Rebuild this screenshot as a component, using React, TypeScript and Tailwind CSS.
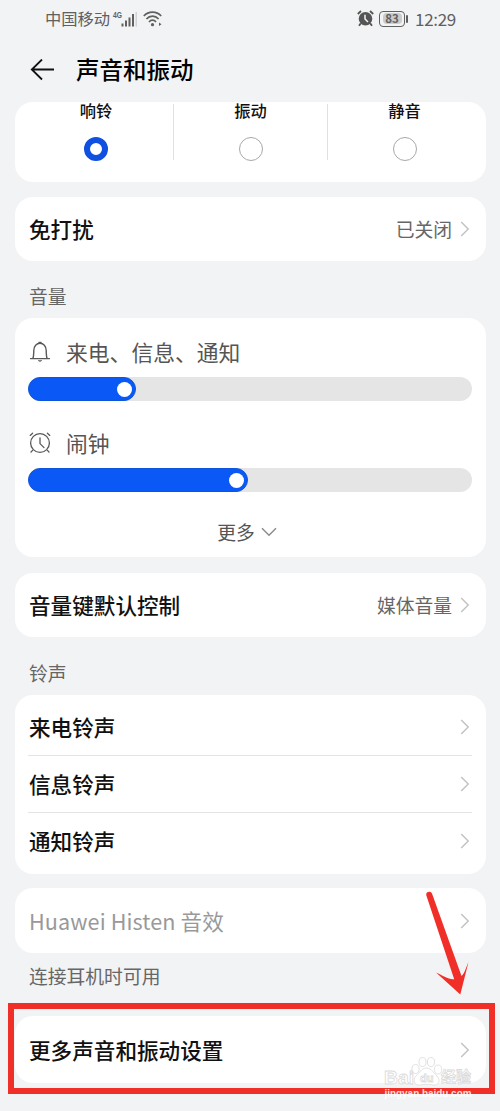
import React from 'react';

interface SettingRowProps {
  title: string;
  value?: string;
  disabled?: boolean;
  className?: string;
}

interface VolumeSliderProps {
  label: string;
  icon: React.ReactNode;
  value: number;
}

const modes = [
  { name: '响铃', checked: true },
  { name: '振动', checked: false },
  { name: '静音', checked: false },
];

const ringtones = ['来电铃声', '信息铃声', '通知铃声'];

const ChevronRight = () => (
  <svg className="w-2.5 h-4" viewBox="0 0 10 16" fill="none" stroke="#c3c3c3" strokeWidth="1.5">
    <path d="M1.2 1 L8.2 8 L1.2 15" />
  </svg>
);

const BellIcon = () => (
  <svg className="w-[22px] h-[22px]" viewBox="0 0 22 22" fill="none" stroke="#595959" strokeWidth="1.4">
    <path d="M1.5 17.6 H20.5" strokeLinecap="round" />
    <path d="M3.9 17.4 C4.7 15.6 4.7 13.5 4.8 9.4 C4.9 5.2 7.5 2.2 11 2.2 C14.5 2.2 17.1 5.2 17.2 9.4 C17.3 13.5 17.3 15.6 18.1 17.4" />
    <path d="M10 1.5 H12" strokeLinecap="round" />
    <path d="M8.8 19.3 H13.2 C12.6 21.2 9.4 21.2 8.8 19.3 Z" fill="#595959" stroke="none" />
  </svg>
);

const ClockIcon = () => (
  <svg className="w-[22px] h-[22px]" viewBox="0 0 22 22" fill="none" stroke="#595959" strokeWidth="1.3" strokeLinecap="round">
    <circle cx="11" cy="11" r="9.4" />
    <path d="M11 6 V11.6 L15 15.6" />
    <path d="M1.2 3.4 L3.6 1.2 M20.8 3.4 L18.4 1.2" />
    <path d="M3.6 18.4 L2 20 M18.4 18.4 L20 20" />
  </svg>
);

const SettingRow: React.FC<SettingRowProps> = ({ title, value, disabled, className = '' }) => {
  return (
    <div className={`flex items-center justify-between pl-3.5 pr-4 ${className}`}>
      <span className={`text-[21.6px] whitespace-nowrap ${disabled ? 'tracking-[0.1px] text-[#999999]' : 'font-medium text-[#111111]'}`}>
        {title}
      </span>
      <div className="flex items-center gap-2">
        {value && <span className="text-[18.8px] text-[#666666]">{value}</span>}
        <ChevronRight />
      </div>
    </div>
  );
};

const VolumeSlider: React.FC<VolumeSliderProps> = ({ label, icon, value }) => {
  return (
    <div className="h-[91px] pl-[13px] pr-3.5">
      <div className="flex items-center h-[34px] gap-[15px] pl-[1px]">
        {icon}
        <span className="text-[21.8px] text-[#555555]">{label}</span>
      </div>
      <div className="mt-2 h-6 rounded-full bg-[#e5e5e5]">
        <div
          className="flex items-center justify-end h-6 pr-[3px] rounded-full bg-[#0a59f7] border border-[#0f55dc]"
          style={{ width: `${value}px` }}
        >
          <div className="w-[15px] h-[15px] rounded-full bg-white" />
        </div>
      </div>
    </div>
  );
};

const StatusBar = () => (
  <div className="flex items-center justify-between h-[37px] pl-[45px] pr-11 text-[#606060]">
    <div className="flex items-center">
      <span className="text-[16.3px]">中国移动</span>
      <svg className="w-[26px] h-5 ml-0.5" viewBox="0 0 26 20" fill="#606060">
        <text x="1" y="8.5" fontSize="9.5" fontWeight="700" fontFamily="Liberation Sans, sans-serif" textLength="9" lengthAdjust="spacingAndGlyphs">4G</text>
        <rect x="9.5" y="14.5" width="2" height="3" />
        <rect x="13" y="11.5" width="2" height="6" />
        <rect x="16.5" y="8.5" width="2" height="9" />
        <rect x="20" y="5" width="2" height="12.5" />
        <rect x="23.5" y="3" width="1.5" height="14.5" fill="#d2d2d2" />
      </svg>
      <svg className="w-5 h-[18px] ml-[5px]" viewBox="0 0 20 18" fill="none" stroke="#606060" strokeWidth="1.7">
        <path d="M0.8 6 C5.5 0.9 13.5 0.9 18.2 6" />
        <path d="M3.4 9 C6.8 5.2 12.2 5.2 15.6 9" />
        <path d="M6 12 C8 9.6 11 9.6 13 12" />
        <circle cx="9.5" cy="14.7" r="1.6" fill="#606060" stroke="none" />
        <path d="M16 12.5 L18.5 14.2 L16 15.9 Z" fill="#606060" stroke="none" />
      </svg>
    </div>
    <div className="flex items-center">
      <svg className="w-[17px] h-[17px]" viewBox="0 0 17 17" fill="none" stroke="#555555" strokeWidth="1.8">
        <circle cx="8.5" cy="8.8" r="6.8" fill="#555555" stroke="none" />
        <path d="M0.8 4 L4 1 M16.2 4 L13 1 M3.8 13.4 L2 15.8 M13.2 13.4 L15 15.8" />
        <path d="M8 4.8 V9 L11 12" stroke="#f2f3f5" strokeWidth="1.5" />
      </svg>
      <div className="flex items-center ml-[5px]">
        <div className="flex items-center justify-center w-[26px] h-4 rounded-[4px] border-[1.5px] border-[#606060] p-px">
          <span className="flex items-center justify-center w-[19px] h-[11px] rounded-sm bg-[#cbcbcb] text-[11.5px] font-bold leading-none">83</span>
        </div>
        <div className="w-0.5 h-2 ml-px rounded-sm bg-[#606060]" />
      </div>
      <span className="ml-[7px] text-[17px] tracking-[-0.3px]">12:29</span>
    </div>
  </div>
);

const Watermark = () => (
  <svg className="absolute left-[383px] top-[1055px] w-[92px] h-[52px]" viewBox="0 0 92 52">
    <g fill="#ffffff" stroke="#dadada" strokeWidth="0.8">
      <ellipse cx="32.5" cy="14" rx="3.6" ry="4.5" />
      <ellipse cx="39.5" cy="7" rx="3.6" ry="4.5" />
      <ellipse cx="48" cy="7" rx="3.6" ry="4.5" />
      <ellipse cx="55" cy="14.5" rx="3.6" ry="4.5" />
      <path d="M43.5 13 C38 13 37 18 33 21 C29 25 32 31 37 30 C41 29 46 29 50 30 C56 31 58 25 54 21 C50 18 49 13 43.5 13 Z" />
      <text x="1" y="28.5" fontSize="19" fontWeight="700" fontFamily="Liberation Sans, sans-serif" textLength="30" lengthAdjust="spacingAndGlyphs">Bai</text>
      <text x="37" y="27" fontSize="11" fontWeight="700" fontFamily="Liberation Sans, sans-serif">du</text>
      <text x="58" y="27" fontSize="15" fontWeight="700" fontFamily="Noto Sans CJK SC, sans-serif">经验</text>
    </g>
    <text x="1.5" y="41.5" fontSize="10.5" fontWeight="700" fill="#ffffff" fillOpacity="0.85" fontFamily="Liberation Sans, sans-serif" textLength="87" lengthAdjust="spacingAndGlyphs">jingyan.baidu.com</text>
  </svg>
);

const App: React.FC = () => {
  return (
    <div className="relative w-[500px] h-[1111px] overflow-hidden bg-[#f2f3f4] font-['Noto_Sans_CJK_SC','Noto_Sans',sans-serif]">
      <StatusBar />

      <header className="flex items-center h-[65px] pl-[30px] gap-[21px]">
        <svg className="w-[25px] h-[22px]" viewBox="0 0 25 22" fill="none" stroke="#111111" strokeWidth="1.8">
          <path d="M1.8 10.5 H24 M12 0.5 L1.8 10.5 L12 20.5" />
        </svg>
        <h1 className="text-[23.5px] font-medium text-black">声音和振动</h1>
      </header>

      <main className="pl-[15px] pr-3.5">
        {/* Sound mode */}
        <div className="flex h-20 pl-1 pr-[5px] rounded-[18px] bg-white">
          {modes.map((mode, i) => (
            <div key={mode.name} className="flex flex-1">
              {i > 0 && <div className="w-px h-14 mt-0.5 bg-[#e0e0e0]" />}
              <div className="flex flex-1 flex-col items-center">
                <span className="h-[17px] leading-4 text-[16.3px] font-medium text-[#111111]">{mode.name}</span>
                <div
                  className={`mt-[18px] w-6 h-6 rounded-full ${
                    mode.checked ? 'border-[6px] border-[#0f50e0]' : 'border-[1.3px] border-[#a8a8a8]'
                  }`}
                />
              </div>
            </div>
          ))}
        </div>

        <SettingRow title="免打扰" value="已关闭" className="mt-[15px] h-16 rounded-[18px] bg-white" />

        {/* Volume */}
        <h2 className="h-[57px] pl-3.5 pt-[14px] flex items-center text-[18.8px] text-[#666666]">音量</h2>
        <div className="h-[239px] pt-[17px] rounded-[18px] bg-white">
          <VolumeSlider label="来电、信息、通知" icon={<BellIcon />} value={108} />
          <VolumeSlider label="闹钟" icon={<ClockIcon />} value={220} />
          <div className="flex items-center justify-center gap-1.5 h-[30px] pr-[7px]">
            <span className="text-[18.8px] text-[#555555]">更多</span>
            <svg className="w-4 h-2.5" viewBox="0 0 16 10" fill="none" stroke="#8c8c8c" strokeWidth="1.5">
              <path d="M1 1.2 L8 8.2 L15 1.2" />
            </svg>
          </div>
        </div>

        <SettingRow title="音量键默认控制" value="媒体音量" className="mt-4 h-16 rounded-[18px] bg-white" />

        {/* Ringtones */}
        <h2 className="h-[58px] pl-3.5 pt-[15px] flex items-center text-[18.8px] text-[#666666]">铃声</h2>
        <div className="h-[179px] pt-1 rounded-[18px] bg-white">
          {ringtones.map((name, i) => (
            <div key={name}>
              {i > 0 && <div className="h-px ml-[13px] mr-3.5 bg-[#e3e3e3]" />}
              <SettingRow title={name} className="h-14" />
            </div>
          ))}
        </div>

        <SettingRow title="Huawei Histen 音效" disabled className="mt-3.5 h-[65px] pt-px rounded-[18px] bg-white" />
        <p className="h-[63px] pl-3.5 pt-[9px] text-[18.8px] text-[#666666]">连接耳机时可用</p>
        <SettingRow title="更多声音和振动设置" className="h-[67px] pt-px rounded-[18px] bg-white" />
      </main>

      {/* Highlight box and arrow drawn over the page */}
      <div className="absolute left-2 top-[1003px] w-[487px] h-[91px] border-[6px] border-[#f03028]" />
      <svg className="absolute left-[420px] top-[885px] w-[60px] h-[115px]" viewBox="0 0 60 115" fill="#f03028">
        <path d="M6.2 10 C5.8 6.2 11 5.8 12 8.6 L41.5 91 C45 88 46 82 48.5 77 L40.3 109.5 L16 87.5 C22 90 29 95 34.2 94.2 Z" />
      </svg>
      <Watermark />
    </div>
  );
};

export default App;
